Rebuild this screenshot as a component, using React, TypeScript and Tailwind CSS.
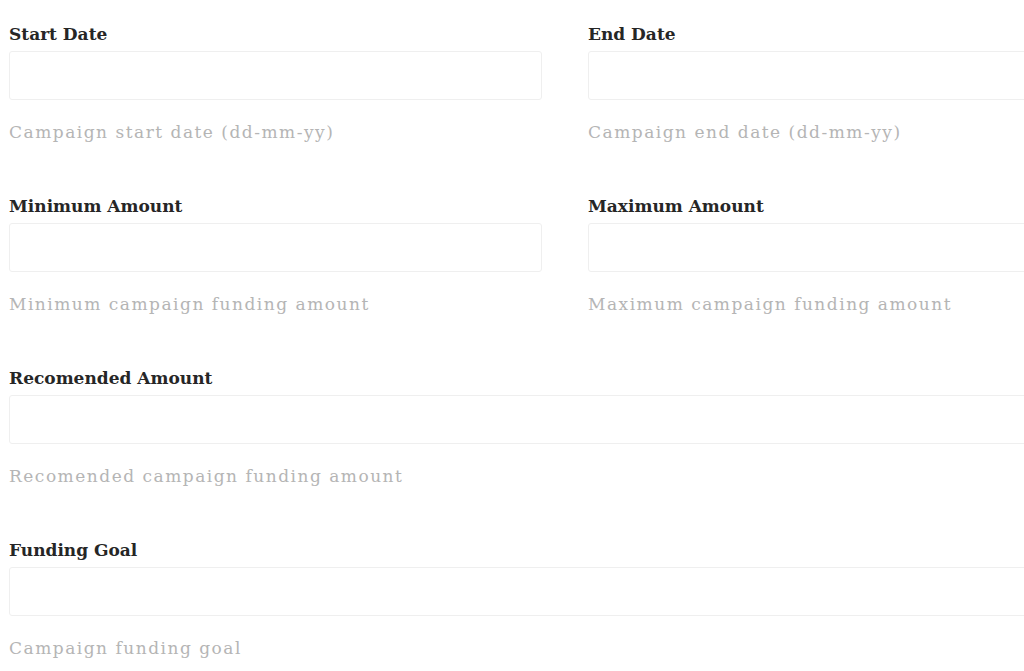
const serif = { fontFamily: '"DejaVu Serif", "Liberation Serif", serif' }

interface FieldProps {
  label: string
  help: string
}

function Field({ label, help }: FieldProps) {
  return (
    <div className="flex flex-col">
      <label className="h-[18px] text-[17px] leading-[18px] font-semibold text-[#262626]">{label}</label>
      <div className="mt-[8px] h-[49px] rounded-[3px] border border-[#efefef] bg-white" />
      <p className="mt-[22px] h-[20px] text-[17px] leading-[20px] tracking-[1.5px] text-[#b5b5b5]">{help}</p>
    </div>
  )
}

export default function App() {
  return (
    <div className="h-[671px] w-[1024px] overflow-hidden bg-white" style={serif}>
      <div className="ml-[9px] flex w-[1112px] flex-col gap-[55px] pt-[25px]">
        <div className="grid grid-cols-2 gap-x-[46px]">
          <Field label="Start Date" help="Campaign start date (dd-mm-yy)" />
          <Field label="End Date" help="Campaign end date (dd-mm-yy)" />
        </div>
        <div className="grid grid-cols-2 gap-x-[46px]">
          <Field label="Minimum Amount" help="Minimum campaign funding amount" />
          <Field label="Maximum Amount" help="Maximum campaign funding amount" />
        </div>
        <Field label="Recomended Amount" help="Recomended campaign funding amount" />
        <Field label="Funding Goal" help="Campaign funding goal" />
      </div>
    </div>
  )
}
